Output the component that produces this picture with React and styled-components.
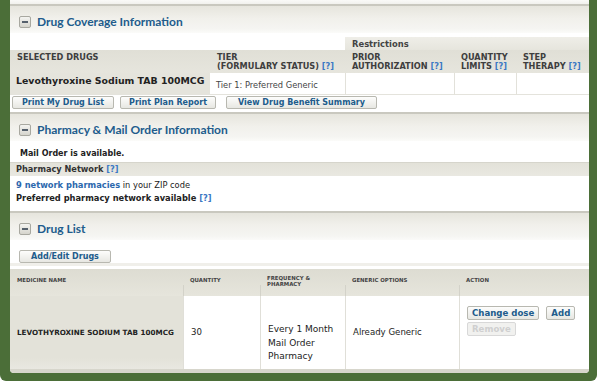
import React from 'react';
import styled, {createGlobalStyle} from 'styled-components';

const GlobalStyle = createGlobalStyle`
  html, body {
    margin: 0;
    padding: 0;
    background: #fff;
    overflow: hidden;
  }
  body {
    font-family: "DejaVu Sans", Verdana, sans-serif;
    color: #222;
  }
`;

const Frame = styled.div`
  width: 579px;
  height: 373px;
  padding: 0 8px 8px 10px;
  background: #4b6e38;
  border-radius: 0 0 6px 6px;
`;

const Panel = styled.div`
  background: #fff;
  height: 100%;
  border-radius: 0 0 4px 4px;
  overflow: hidden;
  display: flex;
  flex-direction: column;
`;

const PrevEdge = styled.div`
  height: 4px;
  background: linear-gradient(#fafaf8, #f1f1ed);
`;

const SectionHeader = styled.div`
  height: 29px;
  box-sizing: border-box;
  border-top: 2px solid #c9c8bf;
  background: linear-gradient(#e6e5dd, #f1f0eb 45%, #f5f5f2 85%, #fbfbf9);
  display: flex;
  align-items: center;
  padding: 4px 0 0 9px;
  gap: 6px;
`;

const Toggle = styled.span`
  width: 12px;
  height: 12px;
  box-sizing: border-box;
  border: 1px solid #a8a8a0;
  border-radius: 2px;
  background: linear-gradient(#f4f4f1, #d5d4cc);
  display: flex;
  align-items: center;
  justify-content: center;
  &::after {
    content: '';
    width: 6px;
    height: 2px;
    background: #55606c;
  }
`;

const Title = styled.h2`
  margin: 0;
  font-family: Lato, "Liberation Sans", Arial, sans-serif;
  font-size: 12px;
  font-weight: bold;
  color: #215c8c;
`;

const Help = styled.span`
  color: #3b78c4;
  font-weight: bold;
`;

const CoverageGrid = styled.div`
  display: grid;
  grid-template-columns: 200px 135px 109px 62px 73px;
  margin-top: 4px;
`;

const Cell = styled.div`
  box-sizing: border-box;
  padding: ${p => p.$pad || '0 6px'};
  background: ${p => p.$bg || '#fff'};
  border-left: ${p => (p.$line ? '1px solid #e2e1da' : 'none')};
  font-size: ${p => p.$size || '8.3px'};
  font-weight: ${p => (p.$bold ? 'bold' : 'normal')};
  color: ${p => p.$color || '#222'};
  line-height: ${p => p.$lh || '9px'};
  grid-column: ${p => p.$span || 'auto'};
  display: flex;
  flex-direction: column;
  justify-content: ${p => p.$align || 'flex-start'};
  white-space: nowrap;
`;

const RestrictionsLabel = styled.div`
  grid-column: 3 / span 3;
  height: 13px;
  background: linear-gradient(#efeee8, #e6e5dd);
  font-size: 8.4px;
  font-weight: bold;
  color: #444;
  padding: 2px 0 0 7px;
  box-sizing: border-box;
`;

const HeadCell = styled(Cell)`
  height: 23px;
  background: linear-gradient(#e0dfd6, #e6e5dd);
  color: #3e3e3e;
  font-weight: bold;
  font-size: 8.2px;
  padding: 3px 7px 0;
  text-transform: uppercase;
`;

const RowCell = styled(Cell)`
  height: 22px;
  border-bottom: 1px solid #e4e3dc;
`;

const ButtonBar = styled.div`
  display: flex;
  gap: 6px;
  padding: 1px 1px 3px 2px;
`;

const Button = styled.button`
  font-family: "DejaVu Sans", Verdana, sans-serif;
  font-size: ${p => (p.$large ? '8.6px' : '8px')};
  font-weight: bold;
  color: ${p => (p.disabled ? '#cfcfcf' : '#215c8c')};
  height: ${p => (p.$large ? '14px' : '13px')};
  padding: 0 ${p => p.$pad || '10px'};
  margin: 0 0 0 ${p => p.$ml || '0'};
  border: 1px solid ${p => (p.disabled ? '#d8d8d8' : '#b8b8b0')};
  border-radius: 2px;
  background: ${p => (p.disabled ? '#f1f1ef' : 'linear-gradient(#fdfdfc, #e7e7e2)')};
  line-height: 11px;
  white-space: nowrap;
`;

const InfoLine = styled.div`
  padding: 0 6px;
  font-size: 8.3px;
  font-weight: ${p => (p.$bold ? 'bold' : 'normal')};
  line-height: 13px;
  color: #222;
`;

const Link = styled.span`
  color: #2c68ad;
  font-weight: bold;
`;

const MailOrder = styled.div`
  height: 21px;
  display: flex;
  align-items: center;
  padding: 4px 0 0 10px;
  box-sizing: border-box;
  font-size: 8px;
  font-weight: bold;
`;

const NetworkBar = styled.div`
  height: 14px;
  box-sizing: border-box;
  background: linear-gradient(#e3e2d9, #e9e8e1);
  border-top: 1px solid #d6d5cc;
  font-size: 8.2px;
  font-weight: bold;
  padding: 1px 6px 0;
  color: #333;
`;

const NetworkBody = styled.div`
  padding: 3px 0 6px;
  height: 35px;
  box-sizing: border-box;
`;

const AddBar = styled.div`
  padding: 4px 9px 0;
  height: 26px;
  box-sizing: border-box;
  border-bottom: 3px solid #f0efea;
`;

const ListGrid = styled.div`
  margin-top: 3px;
  display: grid;
  grid-template-columns: 173px 77px 85px 114px 130px;
  flex: 1;
  grid-template-rows: 27px 1fr;
  border-bottom: 4px solid #d7d6cc;
`;

const ListHead = styled.div`
  background: linear-gradient(#dddcd2, #e6e5dc);
  font-size: 5.4px;
  font-weight: bold;
  color: #444;
  line-height: 5.5px;
  padding: ${p => (p.$twoLine ? '7px' : '9px')} 7px 0;
  text-transform: uppercase;
  box-sizing: border-box;
  position: relative;
  &::after {
    content: '';
    display: ${p => (p.$first ? 'none' : 'block')};
    position: absolute;
    left: 0;
    top: 16px;
    bottom: 0;
    border-left: 1px solid #d3d2c9;
  }
`;

const ListCell = styled.div`
  background: ${p => (p.$grey ? 'linear-gradient(#e3e2d9, #e3e2d9 85%, #e9e8e1)' : '#fff')};
  border-left: ${p => (p.$grey ? 'none' : '1px solid #e0dfd8')};
  box-sizing: border-box;
  padding: ${p => p.$pad || '0 7px'};
  display: flex;
  flex-direction: column;
  justify-content: ${p => p.$justify || 'center'};
  font-size: ${p => p.$size || '8.6px'};
  font-weight: ${p => (p.$bold ? 'bold' : 'normal')};
  line-height: 13.5px;
  color: #222;
`;

const Actions = styled.div`
  display: flex;
  flex-wrap: wrap;
  gap: 2px 7px;
  width: 120px;
`;

export default function App() {
  return (
    <>
      <GlobalStyle />
      <Frame>
        <Panel>
          <PrevEdge />
          <SectionHeader>
            <Toggle />
            <Title>Drug Coverage Information</Title>
          </SectionHeader>
          <CoverageGrid>
            <Cell $span="1 / span 2" />
            <RestrictionsLabel>Restrictions</RestrictionsLabel>
            <HeadCell>Selected Drugs</HeadCell>
            <HeadCell>
              Tier
              <span>(Formulary Status) <Help>[?]</Help></span>
            </HeadCell>
            <HeadCell>
              Prior
              <span>Authorization <Help>[?]</Help></span>
            </HeadCell>
            <HeadCell>
              Quantity
              <span>Limits <Help>[?]</Help></span>
            </HeadCell>
            <HeadCell>
              Step
              <span>Therapy <Help>[?]</Help></span>
            </HeadCell>
            <RowCell $bg="#e5e4dc" $bold $size="9.4px" $lh="11px" $pad="2px 6px 0">
              Levothyroxine Sodium TAB 100MCG
            </RowCell>
            <RowCell $color="#444" $align="center" $pad="3px 6px 0">
              Tier 1: Preferred Generic
            </RowCell>
            <RowCell $line />
            <RowCell $line />
            <RowCell $line />
          </CoverageGrid>
          <ButtonBar>
            <Button $pad="9px">Print My Drug List</Button>
            <Button $pad="8px">Print Plan Report</Button>
            <Button $pad="11px" $ml="4px">View Drug Benefit Summary</Button>
          </ButtonBar>

          <SectionHeader>
            <Toggle />
            <Title>Pharmacy &amp; Mail Order Information</Title>
          </SectionHeader>
          <MailOrder>Mail Order is available.</MailOrder>
          <NetworkBar>
            Pharmacy Network <Help>[?]</Help>
          </NetworkBar>
          <NetworkBody>
            <InfoLine>
              <Link>9 network pharmacies</Link> in your ZIP code
            </InfoLine>
            <InfoLine $bold>
              Preferred pharmacy network available <Help>[?]</Help>
            </InfoLine>
          </NetworkBody>

          <SectionHeader>
            <Toggle />
            <Title>Drug List</Title>
          </SectionHeader>
          <AddBar>
            <Button $pad="11px">Add/Edit Drugs</Button>
          </AddBar>
          <ListGrid>
            <ListHead $first>Medicine Name</ListHead>
            <ListHead>Quantity</ListHead>
            <ListHead $twoLine>
              Frequency &amp;
              <br />
              Pharmacy
            </ListHead>
            <ListHead>Generic Options</ListHead>
            <ListHead>Action</ListHead>
            <ListCell $grey $bold $size="7.2px">
              LEVOTHYROXINE SODIUM TAB 100MCG
            </ListCell>
            <ListCell>30</ListCell>
            <ListCell $justify="flex-start" $pad="27px 7px 0" $size="9px">
              <span>Every 1 Month</span>
              <span>Mail Order</span>
              <span>Pharmacy</span>
            </ListCell>
            <ListCell>Already Generic</ListCell>
            <ListCell $justify="flex-start" $pad="10px 7px 0">
              <Actions>
                <Button $large $pad="4px">Change dose</Button>
                <Button $large $pad="4px">Add</Button>
                <Button $large $pad="4px" disabled>
                  Remove
                </Button>
              </Actions>
            </ListCell>
          </ListGrid>
        </Panel>
      </Frame>
    </>
  );
}
